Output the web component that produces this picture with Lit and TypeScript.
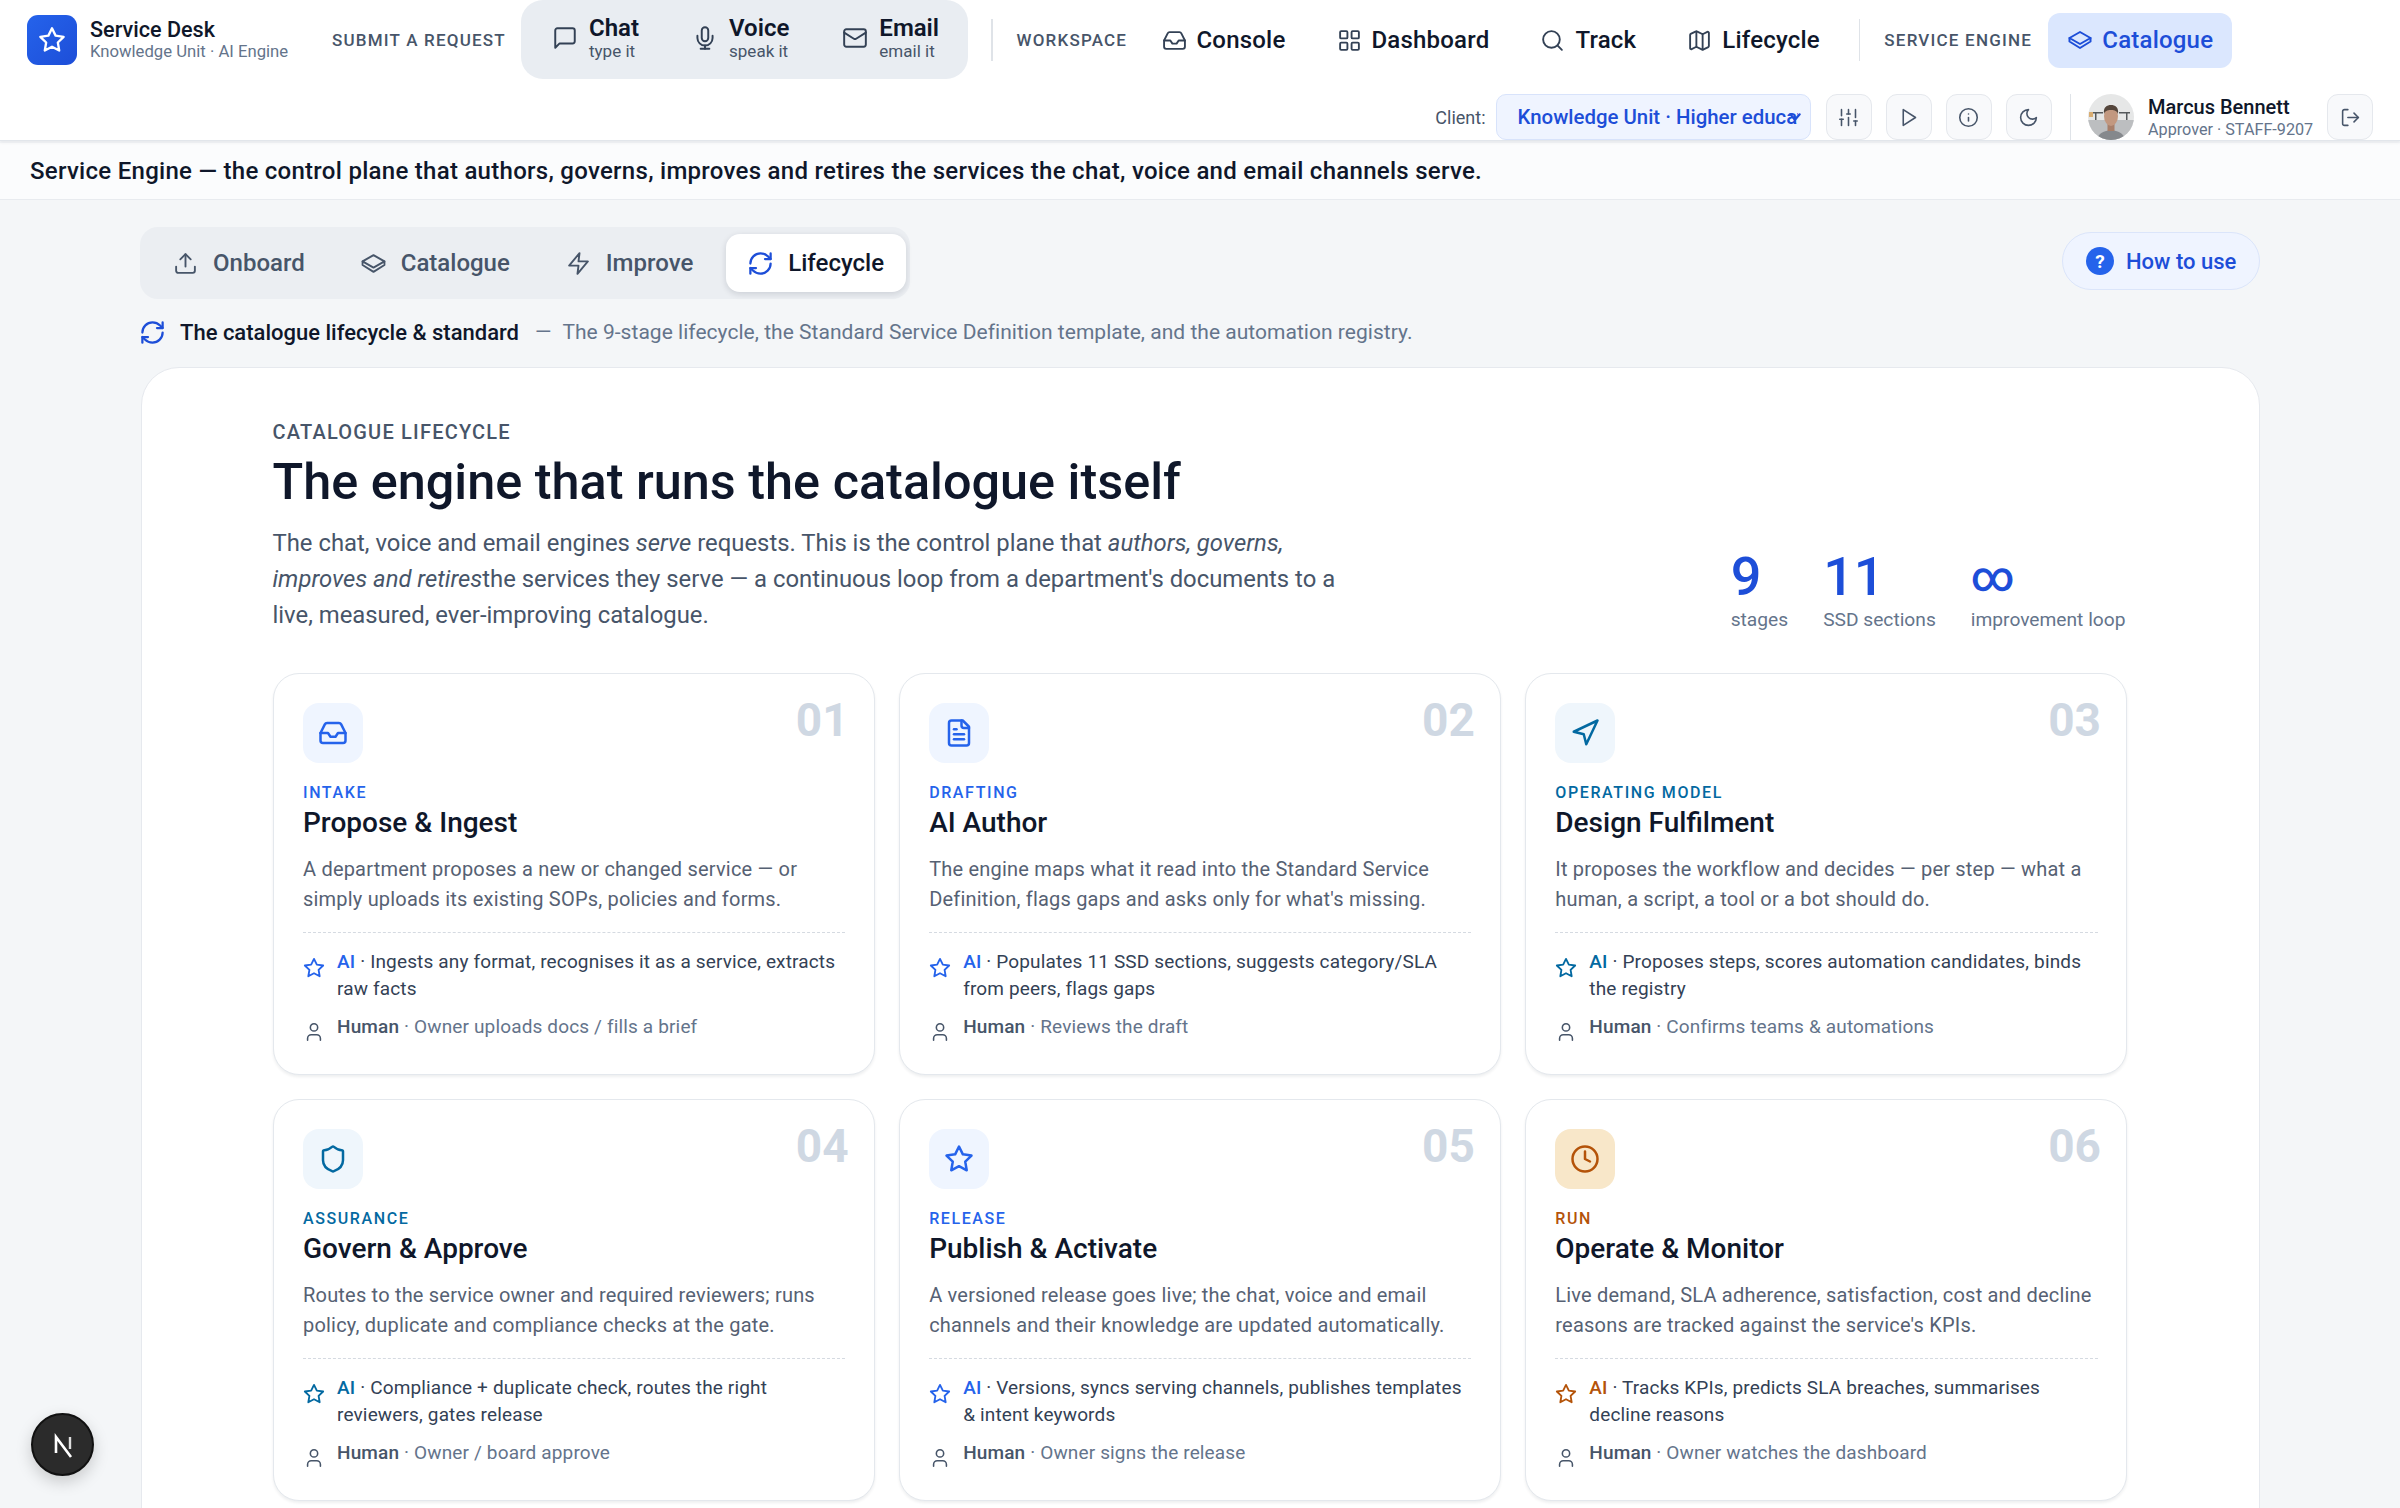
import { LitElement, html, css, svg } from 'lit'
import { customElement } from 'lit/decorators.js'

const icons: Record<string, unknown> = {
  star: svg`<polygon points="12 2 15.09 8.26 22 9.27 17 14.14 18.18 21.02 12 17.77 5.82 21.02 7 14.14 2 9.27 8.91 8.26 12 2"/>`,
  chat: svg`<path d="M21 15a2 2 0 0 1-2 2H7l-4 4V5a2 2 0 0 1 2-2h14a2 2 0 0 1 2 2z"/>`,
  mic: svg`<path d="M12 2a3 3 0 0 0-3 3v7a3 3 0 0 0 6 0V5a3 3 0 0 0-3-3Z"/><path d="M19 10v2a7 7 0 0 1-14 0v-2"/><path d="M12 19v3"/><path d="M8 22h8"/>`,
  mail: svg`<rect x="2" y="4" width="20" height="16" rx="2"/><path d="m22 7-8.97 5.7a1.94 1.94 0 0 1-2.06 0L2 7"/>`,
  inbox: svg`<polyline points="22 12 16 12 14 15 10 15 8 12 2 12"/><path d="M5.45 5.11 2 12v6a2 2 0 0 0 2 2h16a2 2 0 0 0 2-2v-6l-3.45-6.89A2 2 0 0 0 16.76 4H7.24a2 2 0 0 0-1.79 1.11z"/>`,
  grid: svg`<rect x="3" y="3" width="7" height="7" rx="1"/><rect x="14" y="3" width="7" height="7" rx="1"/><rect x="14" y="14" width="7" height="7" rx="1"/><rect x="3" y="14" width="7" height="7" rx="1"/>`,
  search: svg`<circle cx="11" cy="11" r="8"/><path d="m21 21-4.3-4.3"/>`,
  map: svg`<path d="M14.106 5.553a2 2 0 0 0 1.788 0l3.659-1.83A1 1 0 0 1 21 4.619v12.764a1 1 0 0 1-.553.894l-4.553 2.277a2 2 0 0 1-1.788 0l-4.212-2.106a2 2 0 0 0-1.788 0l-3.659 1.83A1 1 0 0 1 3 19.381V6.618a1 1 0 0 1 .553-.894l4.553-2.277a2 2 0 0 1 1.788 0z"/><path d="M15 5.764v15"/><path d="M9 3.236v15"/>`,
  layers: svg`<path d="M12 4 22.5 10 12 16 1.5 10z"/><path d="M1.5 10v3.5L12 20l10.5-6.500V10"/>`,
  sliders: svg`<path d="M4 21v-7"/><path d="M4 10V3"/><path d="M12 21v-9"/><path d="M12 8V3"/><path d="M20 21v-5"/><path d="M20 12V3"/><path d="M2 14h4"/><path d="M10 8h4"/><path d="M18 16h4"/>`,
  play: svg`<polygon points="6 3 20 12 6 21 6 3"/>`,
  info: svg`<circle cx="12" cy="12" r="10"/><path d="M12 16v-4"/><path d="M12 8h.01"/>`,
  moon: svg`<path d="M12 3a6 6 0 0 0 9 9 9 9 0 1 1-9-9Z"/>`,
  logout: svg`<path d="M9 21H5a2 2 0 0 1-2-2V5a2 2 0 0 1 2-2h4"/><polyline points="16 17 21 12 16 7"/><line x1="21" y1="12" x2="9" y2="12"/>`,
  upload: svg`<path d="M21 15v4a2 2 0 0 1-2 2H5a2 2 0 0 1-2-2v-4"/><polyline points="17 8 12 3 7 8"/><line x1="12" y1="3" x2="12" y2="15"/>`,
  zap: svg`<polygon points="13 2 3 14 12 14 11 22 21 10 12 10 13 2"/>`,
  refresh: svg`<path d="M3 12a9 9 0 0 1 9-9 9.75 9.75 0 0 1 6.74 2.74L21 8"/><path d="M21 3v5h-5"/><path d="M21 12a9 9 0 0 1-9 9 9.75 9.75 0 0 1-6.74-2.74L3 16"/><path d="M8 16H3v5"/>`,
  file: svg`<path d="M15 2H6a2 2 0 0 0-2 2v16a2 2 0 0 0 2 2h12a2 2 0 0 0 2-2V7Z"/><path d="M14 2v4a2 2 0 0 0 2 2h4"/><path d="M10 9H8"/><path d="M16 13H8"/><path d="M16 17H8"/>`,
  nav: svg`<polygon points="3 11 22 2 13 21 11 13 3 11"/>`,
  shield: svg`<path d="M20 13c0 5-3.5 7.5-7.66 8.95a1 1 0 0 1-.67-.01C7.5 20.5 4 18 4 13V6a1 1 0 0 1 1-1c2 0 4.5-1.2 6.24-2.72a1.17 1.17 0 0 1 1.52 0C14.51 3.81 17 5 19 5a1 1 0 0 1 1 1z"/>`,
  clock: svg`<circle cx="12" cy="12" r="10"/><polyline points="12 6 12 12 16 14"/>`,
  user: svg`<circle cx="12" cy="7" r="4"/><path d="M5 21v-2a4 4 0 0 1 4-4h6a4 4 0 0 1 4 4v2"/>`,
}

const icon = (name: string, size: number, sw = 2) => html`<svg class="ic" width=${size} height=${size} viewBox="0 0 24 24" fill="none" stroke="currentColor" stroke-width=${sw} stroke-linecap="round" stroke-linejoin="round">${icons[name]}</svg>`

const stages = [
  { n: '01', icon: 'inbox', tone: 'blue', tag: 'INTAKE', title: 'Propose & Ingest', desc: 'A department proposes a new or changed service — or simply uploads its existing SOPs, policies and forms.', ai: 'Ingests any format, recognises it as a service, extracts raw facts', human: 'Owner uploads docs / fills a brief' },
  { n: '02', icon: 'file', tone: 'blue', tag: 'DRAFTING', title: 'AI Author', desc: "The engine maps what it read into the Standard Service Definition, flags gaps and asks only for what's missing.", ai: 'Populates 11 SSD sections, suggests category/SLA from peers, flags gaps', human: 'Reviews the draft' },
  { n: '03', icon: 'nav', tone: 'teal', tag: 'OPERATING MODEL', title: 'Design Fulfilment', desc: 'It proposes the workflow and decides — per step — what a human, a script, a tool or a bot should do.', ai: 'Proposes steps, scores automation candidates, binds the registry', human: 'Confirms teams & automations' },
  { n: '04', icon: 'shield', tone: 'teal', tag: 'ASSURANCE', title: 'Govern & Approve', desc: 'Routes to the service owner and required reviewers; runs policy, duplicate and compliance checks at the gate.', ai: 'Compliance + duplicate check, routes the right reviewers, gates release', human: 'Owner / board approve' },
  { n: '05', icon: 'star', tone: 'blue', tag: 'RELEASE', title: 'Publish & Activate', desc: 'A versioned release goes live; the chat, voice and email channels and their knowledge are updated automatically.', ai: 'Versions, syncs serving channels, publishes templates & intent keywords', human: 'Owner signs the release' },
  { n: '06', icon: 'clock', tone: 'amber', tag: 'RUN', title: 'Operate & Monitor', desc: "Live demand, SLA adherence, satisfaction, cost and decline reasons are tracked against the service's KPIs.", ai: 'Tracks KPIs, predicts SLA breaches, summarises decline reasons', human: 'Owner watches the dashboard' },
]

@customElement('app-root')
export class AppRoot extends LitElement {
  renderHeader() {
    return html`
      <header class="top">
        <div class="row-a">
          <div class="brand">
            <span class="logo">${icon('star', 28, 2)}</span>
            <div>
              <div class="brand-name">Service Desk</div>
              <div class="brand-sub">Knowledge Unit · AI Engine</div>
            </div>
          </div>
          <span class="cap submit">SUBMIT A REQUEST</span>
          <div class="channels">
            ${[['chat', 'Chat', 'type it'], ['mic', 'Voice', 'speak it'], ['mail', 'Email', 'email it']].map(([i, a, b]) => html`
              <div class="channel">
                ${icon(i, 26, 1.8)}
                <div><div class="ch-name">${a}</div><div class="ch-sub">${b}</div></div>
              </div>`)}
          </div>
          <span class="vline first"></span>
          <span class="cap ws">WORKSPACE</span>
          <nav class="links">
            ${[['inbox', 'Console'], ['grid', 'Dashboard'], ['search', 'Track'], ['map', 'Lifecycle']].map(([i, t]) => html`
              <a class="link">${icon(i, 25, 1.8)}${t}</a>`)}
          </nav>
          <span class="vline second"></span>
          <span class="cap se">SERVICE ENGINE</span>
          <a class="cat-link">${icon('layers', 24, 2)}Catalogue</a>
        </div>
        <div class="row-b">
          <span class="client-label">Client:</span>
          <div class="client">
            <span class="client-text">Knowledge Unit · Higher education</span>
            <svg class="chev" width="16" height="16" viewBox="0 0 24 24" fill="none" stroke="currentColor" stroke-width="3.4" stroke-linecap="round" stroke-linejoin="round"><path d="m5 8 7 8 7-8"/></svg>
          </div>
          ${['sliders', 'play', 'info', 'moon'].map(i => html`<span class="tool">${icon(i, 21, 1.8)}</span>`)}
          <span class="vline short"></span>
          <span class="avatar">
            <svg width="46" height="46" viewBox="0 0 46 46">
              <rect width="46" height="46" fill="#e6e7e7"/>
              <rect x="4" y="18" width="11" height="1.5" fill="#55595c"/>
              <rect x="31" y="18" width="11" height="1.5" fill="#55595c"/>
              <rect x="7" y="19" width="1.5" height="7" fill="#55595c"/>
              <rect x="38" y="19" width="1.5" height="7" fill="#55595c"/>
              <rect x="1" y="18" width="4" height="5" fill="#d9ad72"/>
              <rect y="26" width="46" height="20" fill="#bcbec0"/>
              <path d="M9 46c1-7 7-9 14-10 7 1 13 3 14 10z" fill="#85888c"/>
              <rect x="19.500" y="28" width="7" height="9" fill="#a87f6a"/>
              <ellipse cx="23" cy="22" rx="7" ry="10" fill="#c29880"/>
              <path d="M16 20c-1-7 3-9 7-9s8 2 7 9c-1-3-3-4-7-4s-6 1-7 4z" fill="#54453b"/>
            </svg>
          </span>
          <div class="who">
            <div class="who-name">Marcus Bennett</div>
            <div class="who-sub">Approver · STAFF-9207</div>
          </div>
          <span class="tool out">${icon('logout', 21, 1.8)}</span>
        </div>
      </header>
      <div class="banner">Service Engine — the control plane that authors, governs, improves and retires the services the chat, voice and email channels serve.</div>`
  }

  renderCard(s: (typeof stages)[number]) {
    return html`
      <article class="card ${s.tone}">
        <span class="num">${s.n}</span>
        <span class="tile">${icon(s.icon, 30, 2)}</span>
        <div class="tag">${s.tag}</div>
        <h3>${s.title}</h3>
        <p class="desc">${s.desc}</p>
        <div class="who-row ai">
          ${icon('star', 22, 2)}
          <div><b>AI</b> · ${s.ai}</div>
        </div>
        <div class="who-row human">
          ${icon('user', 22, 1.7)}
          <div><b>Human</b> · ${s.human}</div>
        </div>
      </article>`
  }

  render() {
    return html`
      ${this.renderHeader()}
      <main>
        <div class="tabbar">
          <div class="tabs">
            ${[['upload', 'Onboard'], ['layers', 'Catalogue'], ['zap', 'Improve']].map(([i, t]) => html`<span class="tab">${icon(i, 25, 1.8)}${t}</span>`)}
            <span class="tab active">${icon('refresh', 27, 2)}Lifecycle</span>
          </div>
          <a class="howto"><span class="q">?</span>How to use</a>
        </div>
        <div class="crumb">
          ${icon('refresh', 27, 2)}
          <strong>The catalogue lifecycle &amp; standard</strong>
          <span class="dash">—</span>
          <span>The 9-stage lifecycle, the Standard Service Definition template, and the automation registry.</span>
        </div>
        <section class="panel">
          <div class="eyebrow">CATALOGUE LIFECYCLE</div>
          <h1>The engine that runs the catalogue itself</h1>
          <div class="intro">
            <p class="lead">The chat, voice and email engines <em>serve</em> requests. This is the control plane that <em>authors, governs, improves and retires</em>the services they serve — a continuous loop from a department's documents to a live, measured, ever-improving catalogue.</p>
            <div class="stats">
              <div><div class="big">9</div><div class="lbl">stages</div></div>
              <div><div class="big">11</div><div class="lbl">SSD sections</div></div>
              <div><div class="big inf">∞</div><div class="lbl">improvement loop</div></div>
            </div>
          </div>
          <div class="grid">${stages.map(s => this.renderCard(s))}</div>
        </section>
      </main>
      <span class="next-badge">
        <svg width="34" height="34" viewBox="0 0 34 34" fill="none"><path d="M10 25V9l15 20" stroke="#fff" stroke-width="2.6"/><path d="M24 9v12" stroke="#ddd" stroke-width="2.4"/></svg>
      </span>`
  }

  static styles = css`
    :host {
      display: block;
      position: relative;
      width: 2400px;
      height: 1508px;
      overflow: hidden;
      background: #f4f6f8;
      font-family: Roboto, "Liberation Sans", sans-serif;
      color: #0f172a;
    }
    .ic { flex: none; display: block; }
    .top {
      height: 140px;
      background: #fff;
      box-shadow: 0 1px 0 #e2e6eb, 0 3px 3px rgba(15, 23, 42, .05);
      position: relative;
    }
    .row-a { height: 80px; display: flex; align-items: center; padding-left: 27px; }
    .brand { width: 305px; display: flex; align-items: center; gap: 13px; flex: none; }
    .logo {
      width: 50px; height: 50px; border-radius: 11px; flex: none;
      background: linear-gradient(135deg, #2563eb, #1d4ed8);
      color: #fff; display: grid; place-items: center;
    }
    .brand-name { font-size: 21.6px; font-weight: 500; line-height: 24px; }
    .brand-sub { font-size: 16.7px; color: #64748b; line-height: 20px; }
    .cap { font-size: 17px; font-weight: 500; letter-spacing: 1.2px; color: #475569; flex: none; white-space: nowrap; }
    .submit { width: 189px; }
    .channels {
      height: 79px; display: flex; align-items: center; gap: 53px; padding: 0 31px 3px 31px;
      background: #e9edf2; flex: none; box-sizing: border-box; width: 447px;
      border-radius: 22px; margin-top: -1px;
    }
    .channel { display: flex; align-items: center; gap: 11px; color: #334155; }
    .ch-name { font-size: 24px; font-weight: 600; line-height: 26px; color: #0f172a; }
    .ch-sub { font-size: 17px; line-height: 20px; color: #475569; }
    .vline { width: 1.5px; background: #dfe3e8; flex: none; }
    .vline.first { height: 42px; margin: 0 24px 0 23px; }
    .ws { width: 145px; }
    .links { display: flex; align-items: center; gap: 51px; flex: none; }
    .link { display: flex; align-items: center; gap: 10px; font-size: 24px; font-weight: 500; letter-spacing: .2px; color: #0f172a; }
    .link .ic { color: #334155; }
    .vline.second { height: 42px; margin: 0 24px 0 39px; }
    .se { width: 164px; }
    .cat-link {
      width: 184px; height: 55px; box-sizing: border-box; padding-left: 20px; display: flex; align-items: center; gap: 10px;
      background: #dbe7fe; border-radius: 12px; color: #1d4ed8; font-size: 24px; font-weight: 500; letter-spacing: .2px;
    }
    .row-b { height: 60px; display: flex; align-items: flex-end; justify-content: flex-end; padding: 0 27px 0 0; box-sizing: border-box; }
    .row-b > * { flex: none; }
    .client-label { font-size: 18px; color: #475569; align-self: center; margin: 14px 10px 0 0; }
    .client {
      width: 315px; height: 46px; box-sizing: border-box; border: 1.5px solid #d8e3fb; background: #eff4ff; border-radius: 10px;
      display: flex; align-items: center; padding-left: 21px; color: #1d4ed8; position: relative;
      font-size: 20.4px; font-weight: 500; white-space: nowrap; margin-right: 15px;
    }
    .client-text { width: 280px; overflow: hidden; }
    .chev { position: absolute; right: 7px; top: 14px; color: #1d4ed8; }
    .tool {
      width: 46px; height: 46px; box-sizing: border-box; border: 1.5px solid #e5e8ed; background: #f8f9fb; border-radius: 11px;
      display: grid; place-items: center; color: #475569; margin-right: 14px;
    }
    .vline.short { height: 46px; margin: 0 17px 0 4px; }
    .avatar { width: 46px; height: 46px; border-radius: 50%; overflow: hidden; display: block; }
    .who { margin-left: 14px; width: 179px; align-self: flex-end; height: 46px; }
    .who-name { font-size: 20px; font-weight: 500; line-height: 27px; }
    .who-sub { font-size: 16.2px; line-height: 17px; color: #64748b; }
    .tool.out { margin: 0; }
    .banner {
      height: 57px; margin-top: 3px; box-sizing: border-box; padding-left: 30px; display: flex; align-items: center;
      background: #fbfcfd; border-bottom: 1.5px solid #e8ebef; font-size: 24px; font-weight: 500; letter-spacing: .28px; color: #0f172a;
    }
    main { padding: 27px 140px 0 141px; }
    .tabbar { display: flex; justify-content: space-between; align-items: flex-start; }
    .tabs { height: 72px; display: flex; align-items: center; background: #ebeef2; border-radius: 18px; padding: 0 0 0 33px; margin-left: -1px; box-sizing: border-box; width: 770px; }
    .tab { display: flex; align-items: center; gap: 15px; font-size: 24px; font-weight: 500; color: #475569; }
    .tab + .tab { margin-left: 56px; }
    .tab.active {
      margin-left: 33px; width: 180px; height: 58px; box-sizing: border-box; padding-left: 21px; gap: 14px; background: #fff; color: #0f172a;
      border-radius: 14px; box-shadow: 0 2px 6px rgba(15, 23, 42, .14);
    }
    .tab.active .ic { color: #1d4ed8; }
    .howto {
      height: 58px; width: 198px; box-sizing: border-box; margin-top: 5px; display: flex; align-items: center; gap: 12px; padding-left: 23px;
      background: #eff4ff; border: 1.5px solid #dbe5fa; border-radius: 29px; color: #1d4ed8; font-size: 22px; font-weight: 500;
    }
    .q { width: 28px; height: 28px; border-radius: 50%; background: #2563eb; color: #fff; display: grid; place-items: center; font-size: 19px; font-weight: 700; }
    .crumb { display: flex; align-items: center; margin-top: 18px; height: 30px; font-size: 21px; color: #64748b; margin-left: -2px; }
    .crumb .ic { color: #1d4ed8; margin-right: 14px; }
    .crumb strong { font-size: 22px; font-weight: 500; color: #0f172a; margin-right: 16px; }
    .dash { margin-right: 11px; }
    .crumb span:last-child { letter-spacing: .03px; }
    .panel {
      margin-top: 20px; height: 1300px; box-sizing: border-box; padding: 52px 132px 0 130.5px;
      background: #fff; border: 1.5px solid #e6e9ee; border-radius: 38px;
    }
    .eyebrow { font-size: 20px; font-weight: 500; letter-spacing: 1.2px; color: #475569; line-height: 24px; }
    h1 { margin: 7px 0 0; font-size: 50.4px; line-height: 62px; font-weight: 500; color: #0f172a; }
    .intro { display: flex; justify-content: space-between; align-items: flex-end; margin-top: 11.5px; }
    .lead { margin: 0; width: 1090px; font-size: 23.85px; line-height: 36px; color: #475569; }
    .lead em { font-style: italic; }
    .stats { display: flex; gap: 35px; padding-right: 1.5px; }
    .big { font-size: 54px; line-height: 60px; font-weight: 500; color: #1d4ed8; }
    .big.inf { font-size: 42px; }
    .lbl { font-size: 19.2px; line-height: 26px; color: #64748b; }
    .grid { display: grid; grid-template-columns: repeat(3, 1fr); gap: 24px; margin-top: 40.5px; }
    .card {
      position: relative; height: 402px; box-sizing: border-box; padding: 28.5px 28.5px 0 29.5px;
      border: 1.5px solid #e4e8ed; border-radius: 26px; background: #fff; box-shadow: 0 2px 3px rgba(15, 23, 42, .07);
      --tone: #2563eb; --tile: #eff5ff;
    }
    .card.teal { --tone: #0369a1; --tile: #eff6fc; }
    .card.amber { --tone: #b45309; --tile: #f8e7c9; }
    .num { position: absolute; right: 25px; top: 16.5px; font-size: 46px; line-height: 58px; font-weight: 700; color: #cfd8e3; }
    .tile { width: 60px; height: 60px; border-radius: 16px; background: var(--tile); color: var(--tone); display: grid; place-items: center; }
    .tag { margin-top: 20px; font-size: 16px; line-height: 20px; font-weight: 500; letter-spacing: 1.6px; color: var(--tone); }
    h3 { margin: 2px 0 0; font-size: 28px; line-height: 36px; font-weight: 500; color: #0f172a; }
    .desc { margin: 13.5px 0 0; font-size: 20px; line-height: 30px; letter-spacing: .2px; color: #566173; padding-bottom: 18px; border-bottom: 1.5px dashed #d5dae1; }
    .who-row { display: flex; gap: 12px; font-size: 19px; line-height: 27px; letter-spacing: .15px; }
    .who-row .ic { margin-top: 9px; }
    .who-row.ai { margin-top: 15px; color: #334155; }
    .who-row.ai .ic, .who-row.ai b { color: var(--tone); }
    .who-row.human { margin-top: 11px; color: #64748b; }
    .who-row.human .ic { color: #475569; margin-top: 8px; }
    .who-row b { font-weight: 500; color: #475569; }
    .next-badge {
      position: absolute; left: 31px; top: 1413px; width: 63px; height: 63px; box-sizing: border-box; border-radius: 50%;
      background: #2b2b2b; border: 2px solid #111; box-shadow: 0 6px 16px rgba(0, 0, 0, .18); display: grid; place-items: center;
    }
  `
}
